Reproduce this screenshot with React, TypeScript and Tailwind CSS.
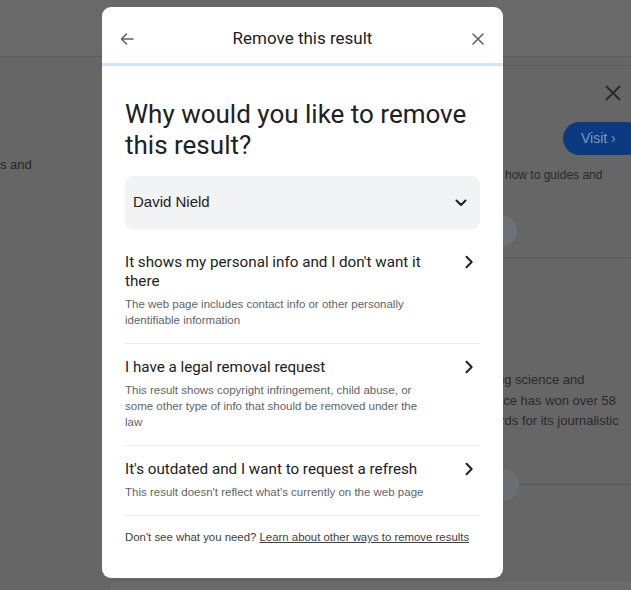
import React from "react";

const gs = { fontFamily: "Roboto, 'Open Sans', sans-serif" };
const ar = { fontFamily: "'Liberation Sans', Arial, sans-serif" };

function ChevronRight() {
  return (
    <svg width="10" height="14" viewBox="0 0 10 14" fill="none">
      <path d="M2.5 1.8 L7.7 7 L2.5 12.2" stroke="#202124" strokeWidth="2" strokeLinecap="round" strokeLinejoin="round" />
    </svg>
  );
}

function Item({ title, desc }: { title: React.ReactNode; desc: React.ReactNode }) {
  return (
    <div className="flex items-start justify-between border-b border-[#e8eaed] pt-[14px] pb-[15px]">
      <div className="w-[310px]">
        <div className="text-[15.2px] leading-[19px] text-[#202124]" style={gs}>{title}</div>
        <div className="mt-[5px] text-[11.5px] leading-[16px] text-[#5f6368]" style={ar}>{desc}</div>
      </div>
      <div className="mr-[6px] mt-[2px]"><ChevronRight /></div>
    </div>
  );
}

export default function App() {
  return (
    <div className="relative h-[590px] w-[631px] overflow-hidden bg-[#666666]" style={ar}>
      {/* background page */}
      <div className="flex h-full flex-col">
        <div className="h-[57px] shrink-0 border-b border-[#5c5c5c] bg-[#696969]" />
        <div className="flex flex-1">
          <div className="w-[108px] shrink-0">
            <div className="mt-[100px] text-[13px] leading-[16px] text-[#262626]">s and</div>
          </div>
          <div className="flex flex-1 flex-col">
            <div className="flex flex-1">
              <div className="w-[395px] shrink-0" />
              <div className="flex flex-1 flex-col">
                <div className="mt-[8px] border-t border-[#5c5c5c]" />
                <div className="flex justify-end pr-[9px] pt-[18px]">
                  <svg width="18" height="18" viewBox="0 0 18 18"><path d="M2 2 L16 16 M16 2 L2 16" stroke="#2a2a2a" strokeWidth="2" /></svg>
                </div>
                <div className="mt-[20px] flex justify-end">
                  <div className="-mr-[12px] flex h-[33px] w-[80px] items-center rounded-full bg-[#0b3a82] pl-[18px] text-[14px] text-[#8096bd]">Visit ›</div>
                </div>
                <div className="mt-[12px] pl-[2px] text-[12px] leading-[16px] text-[#2a2a2a]">how to guides and</div>
                <div className="mt-[32px] -ml-[20px] h-[32px] w-[34px] rounded-full bg-[#6e7278]" />
                <div className="mt-[10px] border-t border-[#595959]" />
                <div className="mt-[112px] -ml-[6px] whitespace-nowrap text-[13px] leading-[20.5px] text-[#2a2a2a]">
                  <div>ng science and</div>
                  <div className="-ml-[1px]">nce has won over 58</div>
                  <div className="-ml-[4px]">ards for its journalistic</div>
                </div>
                <div className="mt-[37px] flex items-center">
                  <div className="-ml-[16px] h-[32px] w-[32px] shrink-0 rounded-full bg-[#6b6e73]" />
                  <div className="flex-1 border-t border-[#595959]" />
                </div>
                <div className="flex-1" />
              </div>
            </div>
            <div className="h-[10px] shrink-0 overflow-hidden rounded-tl-[8px] border-l border-t border-[#5e5e5e] bg-[#6a6a6a] pl-[50px] pt-[6px]">
              <div className="whitespace-nowrap text-[16px] font-bold leading-[20px] text-[#1e1e1e]">The complete coverage on the results</div>
            </div>
          </div>
        </div>
      </div>

      {/* modal */}
      <div className="absolute left-[102px] top-[7px] flex h-[571px] w-[401px] flex-col overflow-hidden rounded-[9px] bg-white">
        <div className="flex h-[56px] shrink-0 items-center justify-between px-[16px] pt-[8px]">
          <svg width="18" height="18" viewBox="0 0 18 18" fill="none">
            <path d="M15 9 H3.5 M8.5 4 L3.5 9 L8.5 14" stroke="#5f6368" strokeWidth="1.6" strokeLinecap="round" strokeLinejoin="round" />
          </svg>
          <div className="text-[17px] text-[#202124]" style={gs}>Remove this result</div>
          <svg width="18" height="18" viewBox="0 0 18 18" fill="none">
            <path d="M4 4 L14 14 M14 4 L4 14" stroke="#5f6368" strokeWidth="1.6" strokeLinecap="round" />
          </svg>
        </div>
        <div className="h-[3px] shrink-0 bg-[#d3e3fb]" />
        <div className="flex flex-col px-[23px] pt-[33px]">
          <div className="text-[26px] leading-[31px] text-[#202124]" style={gs}>
            Why would you like to remove this result?
          </div>
          <div className="mt-[15px] flex h-[53px] items-center justify-between rounded-[8px] bg-[#f1f3f4] pl-[8px] pr-[13px]">
            <span className="text-[15px] text-[#202124]">David Nield</span>
            <svg width="12" height="8" viewBox="0 0 12 8" fill="none">
              <path d="M1.5 1.5 L6 6 L10.5 1.5" stroke="#202124" strokeWidth="2" strokeLinecap="round" strokeLinejoin="round" />
            </svg>
          </div>
          <div className="mt-[10px]">
            <Item
              title={<>It shows my personal info and I don't want it there</>}
              desc={<>The web page includes contact info or other personally identifiable information</>}
            />
            <Item
              title="I have a legal removal request"
              desc="This result shows copyright infringement, child abuse, or some other type of info that should be removed under the law"
            />
            <Item
              title="It's outdated and I want to request a refresh"
              desc="This result doesn't reflect what's currently on the web page"
            />
          </div>
          <div className="mt-[13px] text-[11.4px] leading-[16px] text-[#3c4043]">
            Don't see what you need? <span className="underline">Learn about other ways to remove results</span>
          </div>
        </div>
      </div>
    </div>
  );
}
